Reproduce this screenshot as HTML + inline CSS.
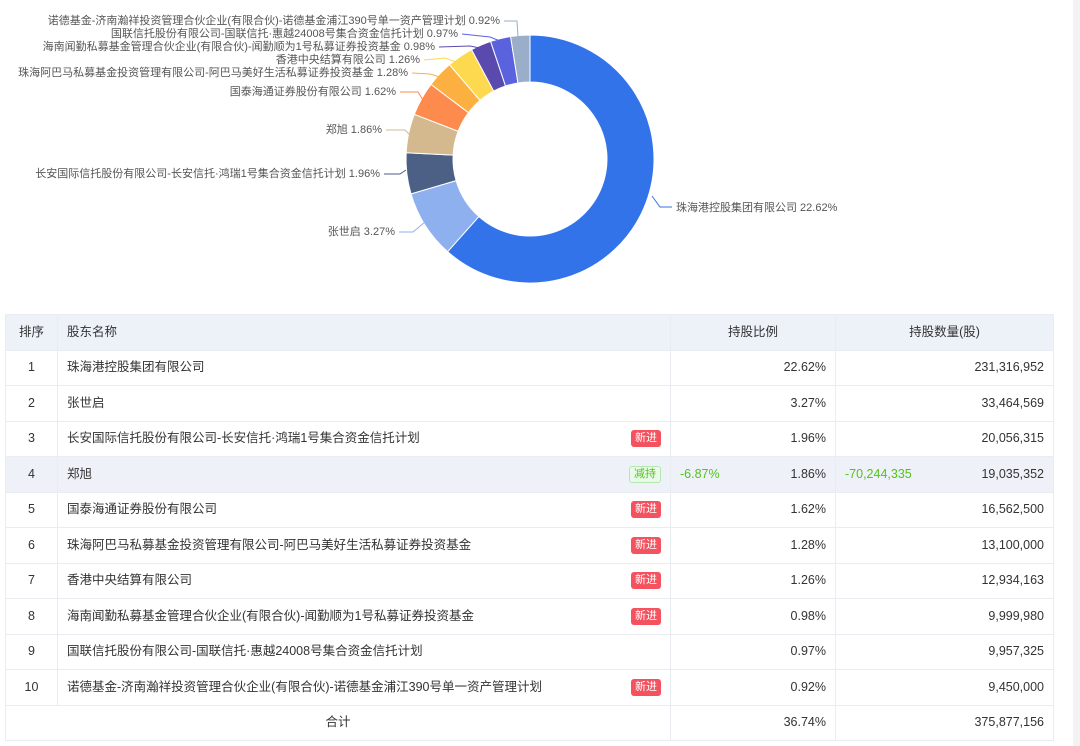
<!DOCTYPE html>
<html><head><meta charset="utf-8"><style>
*{margin:0;padding:0;box-sizing:border-box}
body{width:1080px;height:746px;background:#fff;font-family:"Liberation Sans","Noto Sans CJK SC",sans-serif;position:relative;overflow:hidden;color:#333}
#sb{position:absolute;left:1073px;top:0;width:7px;height:746px;background:#f3f3f3}
svg{position:absolute;left:0;top:0}
table{position:absolute;left:5px;top:314px;width:1048px;border-collapse:collapse;font-size:12.5px;table-layout:fixed}
td,th{border:1px solid #e9ecf0;height:35.5px;font-weight:normal;padding:0 9px;vertical-align:middle;line-height:17px}
th{background:#edf1f8;}
tr.h td{background:#eef2f8}
.c{text-align:center}.r{text-align:right}
.f{display:flex;justify-content:space-between;align-items:center}
.b{font-size:11px;line-height:17px;padding:0 4px;border-radius:3px;background:#f4525f;color:#fff}
.g{background:#eafaea;color:#52c41a;border:1px solid #b5e6b0;line-height:15px}
.gr{color:#52c41a}
</style></head><body>
<div id="sb"></div>
<svg width="1080" height="310" id="ch" font-family="Liberation Sans, Noto Sans CJK SC, sans-serif" font-size="11" fill="#555"></svg>
<table>
<colgroup><col style="width:52px"><col style="width:613px"><col style="width:165px"><col style="width:218px"></colgroup>
<tr><th class="c">排序</th><th style="text-align:left">股东名称</th><th class="c">持股比例</th><th class="c">持股数量(股)</th></tr>
<tr><td class="c">1</td><td>珠海港控股集团有限公司</td><td class="r">22.62%</td><td class="r">231,316,952</td></tr>
<tr><td class="c">2</td><td>张世启</td><td class="r">3.27%</td><td class="r">33,464,569</td></tr>
<tr><td class="c">3</td><td><div class="f"><span>长安国际信托股份有限公司-长安信托·鸿瑞1号集合资金信托计划</span><span class="b">新进</span></div></td><td class="r">1.96%</td><td class="r">20,056,315</td></tr>
<tr class="h"><td class="c">4</td><td><div class="f"><span>郑旭</span><span class="b g">减持</span></div></td><td><div class="f"><span class="gr">-6.87%</span><span>1.86%</span></div></td><td><div class="f"><span class="gr">-70,244,335</span><span>19,035,352</span></div></td></tr>
<tr><td class="c">5</td><td><div class="f"><span>国泰海通证券股份有限公司</span><span class="b">新进</span></div></td><td class="r">1.62%</td><td class="r">16,562,500</td></tr>
<tr><td class="c">6</td><td><div class="f"><span>珠海阿巴马私募基金投资管理有限公司-阿巴马美好生活私募证券投资基金</span><span class="b">新进</span></div></td><td class="r">1.28%</td><td class="r">13,100,000</td></tr>
<tr><td class="c">7</td><td><div class="f"><span>香港中央结算有限公司</span><span class="b">新进</span></div></td><td class="r">1.26%</td><td class="r">12,934,163</td></tr>
<tr><td class="c">8</td><td><div class="f"><span>海南闻勤私募基金管理合伙企业(有限合伙)-闻勤顺为1号私募证券投资基金</span><span class="b">新进</span></div></td><td class="r">0.98%</td><td class="r">9,999,980</td></tr>
<tr><td class="c">9</td><td>国联信托股份有限公司-国联信托·惠越24008号集合资金信托计划</td><td class="r">0.97%</td><td class="r">9,957,325</td></tr>
<tr><td class="c">10</td><td><div class="f"><span>诺德基金-济南瀚祥投资管理合伙企业(有限合伙)-诺德基金浦江390号单一资产管理计划</span><span class="b">新进</span></div></td><td class="r">0.92%</td><td class="r">9,450,000</td></tr>
<tr><td colspan="2" class="c">合计</td><td class="r">36.74%</td><td class="r">375,877,156</td></tr>
</table>
<script>
var d=[[22.62,"#3373ea"],[3.27,"#8fb0ee"],[1.96,"#4c5f85"],[1.86,"#d4b98f"],[1.62,"#fd8b4d"],[1.28,"#fdb042"],[1.26,"#fdd94f"],[0.98,"#5b4aae"],[0.97,"#5a62de"],[0.92,"#9aadc9"]];
var cx=530,cy=159,R=124,r=77,t=36.74,a=0,s="";
function p(rad,ang){return [cx+rad*Math.sin(ang),cy-rad*Math.cos(ang)]}
d.forEach(function(e){var a0=a/t*2*Math.PI;a+=e[0];var a1=a/t*2*Math.PI;var L=(a1-a0)>Math.PI?1:0;
var A=p(R,a0),B=p(R,a1),C=p(r,a1),D=p(r,a0);
s+='<path fill="'+e[1]+'" stroke="#fff" stroke-width="1" d="M'+A+' A'+R+' '+R+' 0 '+L+' 1 '+B+' L'+C+' A'+r+' '+r+' 0 '+L+' 0 '+D+'Z"/>';});
var L=[["诺德基金-济南瀚祥投资管理合伙企业(有限合伙)-诺德基金浦江390号单一资产管理计划 0.92%",500,24,"#9aadc9","504,21 517,21 518,37"],
["国联信托股份有限公司-国联信托·惠越24008号集合资金信托计划 0.97%",458,37,"#5a62de","462,34 490,37 500,41"],
["海南闻勤私募基金管理合伙企业(有限合伙)-闻勤顺为1号私募证券投资基金 0.98%",435,50,"#5b4aae","439,47 470,46 480,48"],
["香港中央结算有限公司 1.26%",420,63,"#fdd94f","424,60 445,58 456,62"],
["珠海阿巴马私募基金投资管理有限公司-阿巴马美好生活私募证券投资基金 1.28%",408,76,"#fdb042","412,73 430,74 440,77"],
["国泰海通证券股份有限公司 1.62%",396,95,"#fd8b4d","400,92 418,92 423,100"],
["郑旭 1.86%",382,133,"#d4b98f","386,130 405,130 411,136"],
["长安国际信托股份有限公司-长安信托·鸿瑞1号集合资金信托计划 1.96%",380,177,"#4c5f85","384,174 400,174 406,170"],
["张世启 3.27%",395,235,"#8fb0ee","399,232 413,232 425,222"]];
L.forEach(function(l){s+='<polyline fill="none" stroke="'+l[3]+'" points="'+l[4]+'"/><text x="'+l[1]+'" y="'+l[2]+'" text-anchor="end">'+l[0]+'</text>';});
s+='<polyline fill="none" stroke="#3373ea" points="652,196 660,207 672,207"/><text x="676" y="211">珠海港控股集团有限公司 22.62%</text>';
document.getElementById("ch").innerHTML=s;
</script>
</body></html>
